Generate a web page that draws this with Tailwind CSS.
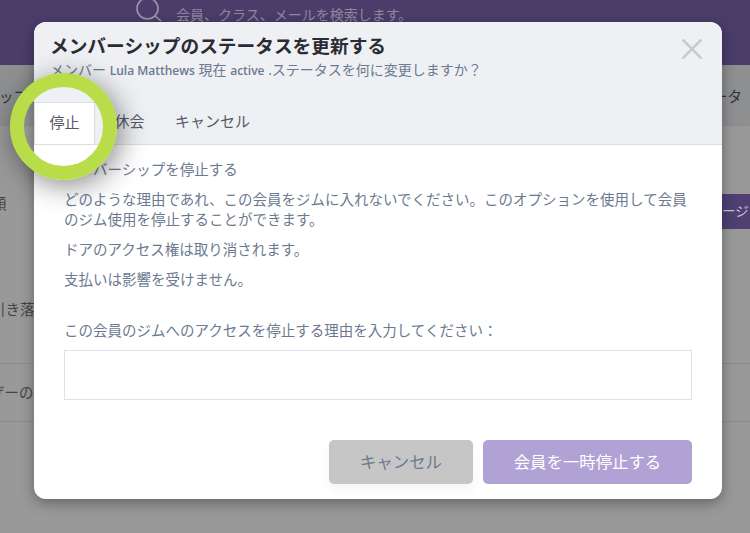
<!DOCTYPE html>
<html lang="ja">

<head>
  <meta charset="UTF-8" />
  <meta name="viewport" content="width=device-width, initial-scale=1.0" />
  <script src="https://cdn.jsdelivr.net/npm/@tailwindcss/browser@4"></script>
  <title>メンバーシップのステータスを更新する</title>
</head>

<body class="relative h-[533px] w-[750px] overflow-hidden bg-[#999999] font-['Open_Sans','Noto_Sans_CJK_JP',sans-serif]">

  <!-- page behind the modal -->
  <header class="flex h-[65px] items-start bg-[#4b3d6a] pl-[135px]">
    <svg class="-mt-1 h-[28px] w-[28px] text-[#9b95a8]" viewBox="0 0 28 28" fill="none" stroke="currentColor" stroke-width="1.6">
      <circle cx="12.5" cy="12.5" r="10.5" />
      <path d="M20 20l6 5" />
    </svg>
    <span class="ml-[13px] mt-[5px] text-[14px] leading-5 text-[#8f889f]">会員、クラス、メールを検索します。</span>
  </header>

  <div class="flex h-[61px] items-center justify-between border-b border-[#8c8c8c] bg-[#8d8f90] pr-2 pt-1 text-[14.5px] text-[#333]">
    <span class="-ml-[1px]">ップ</span>
    <span>ータ</span>
  </div>
  <div class="flex h-[238px] flex-col border-b border-[#8c8c8c]">
    <div class="flex items-start justify-between pt-[68px]">
      <span class="-ml-[8px] text-[14.5px] leading-5 text-[#444]">額</span>
      <span class="w-[28px] overflow-hidden whitespace-nowrap bg-[#4f4074] py-[8px] text-[13.5px] leading-[19px] text-[#c9c4d4]">ージ</span>
    </div>
    <span class="-ml-[9px] mt-[71px] text-[14.5px] leading-5 text-[#444]">引き落</span>
  </div>
  <div class="flex h-[58px] items-center border-b border-[#8c8c8c] text-[14.5px] text-[#444]">
    <span class="-ml-[10px]">ザーの</span>
  </div>

  <!-- modal -->
  <div class="absolute left-[34px] top-[22px] flex h-[477px] w-[688px] flex-col overflow-hidden rounded-[12px] bg-white shadow-[0_4px_14px_rgba(0,0,0,0.35)]">
    <div class="relative h-[123px] shrink-0 border-b border-[#dcdde2] bg-[#eff0f4]">
      <h2 class="pl-4 pt-[10px] text-[18.7px] font-bold leading-[27px] text-[#2b2b33]">メンバーシップのステータスを更新する</h2>
      <p class="mt-[1px] pl-4 text-[14px] leading-[20px] text-[#6b7a90]">メンバー <span class="text-[12px] font-semibold">Lula Matthews</span> 現在 <span class="text-[12px] font-semibold">active</span> .ステータスを何に変更しますか？</p>
      <svg class="absolute right-[20px] top-[17px] h-[20px] w-[20px] text-[#c8c9cc]" viewBox="0 0 20 20" fill="none" stroke="currentColor" stroke-width="2.6">
        <path d="M0.5 0.5l19 19M19.5 0.5l-19 19" />
      </svg>
      <nav class="absolute bottom-0 left-0 flex h-[42px] text-[15px] leading-[39px] text-[#555a66]">
        <span class="w-[61px] border-x border-t border-[#dcdde2] bg-white text-center">停止</span>
        <span class="w-[65px] pl-[4px] text-center">休会</span>
        <span class="ml-[15px]">キャンセル</span>
      </nav>
    </div>

    <div class="flex grow flex-col px-[30px] text-[14.5px] leading-[20px] text-[#6b7a90]">
      <p class="mt-[15px]">メンバーシップを停止する</p>
      <p class="mt-[10px]">どのような理由であれ、この会員をジムに入れないでください。このオプションを使用して会員のジム使用を停止することができます。</p>
      <p class="mt-[10px]">ドアのアクセス権は取り消されます。</p>
      <p class="mt-[10px]">支払いは影響を受けません。</p>
      <label class="mt-[31px] block">この会員のジムへのアクセスを停止する理由を入力してください：</label>
      <input type="text" class="mt-[9px] h-[50px] w-full shrink-0 border border-[#dfe1e8] bg-white" />
      <div class="mt-[40px] flex justify-end gap-[10px]">
        <button class="h-[44px] w-[144px] rounded-[5px] bg-[#c6c6c6] text-[16.4px] text-[#6b7a90] shadow-[0_6px_10px_rgba(50,60,90,0.06)]">キャンセル</button>
        <button class="h-[44px] w-[209px] rounded-[5px] bg-[#b0a2d4] text-[16.4px] text-white">会員を一時停止する</button>
      </div>
    </div>
  </div>

  <!-- highlight ring -->
  <div class="absolute left-[10px] top-[73px] h-[107px] w-[107px] rounded-full border-[14px] border-[#b9dd49] shadow-[4px_6px_28px_rgba(0,0,0,0.45)]"></div>

</body>

</html>
